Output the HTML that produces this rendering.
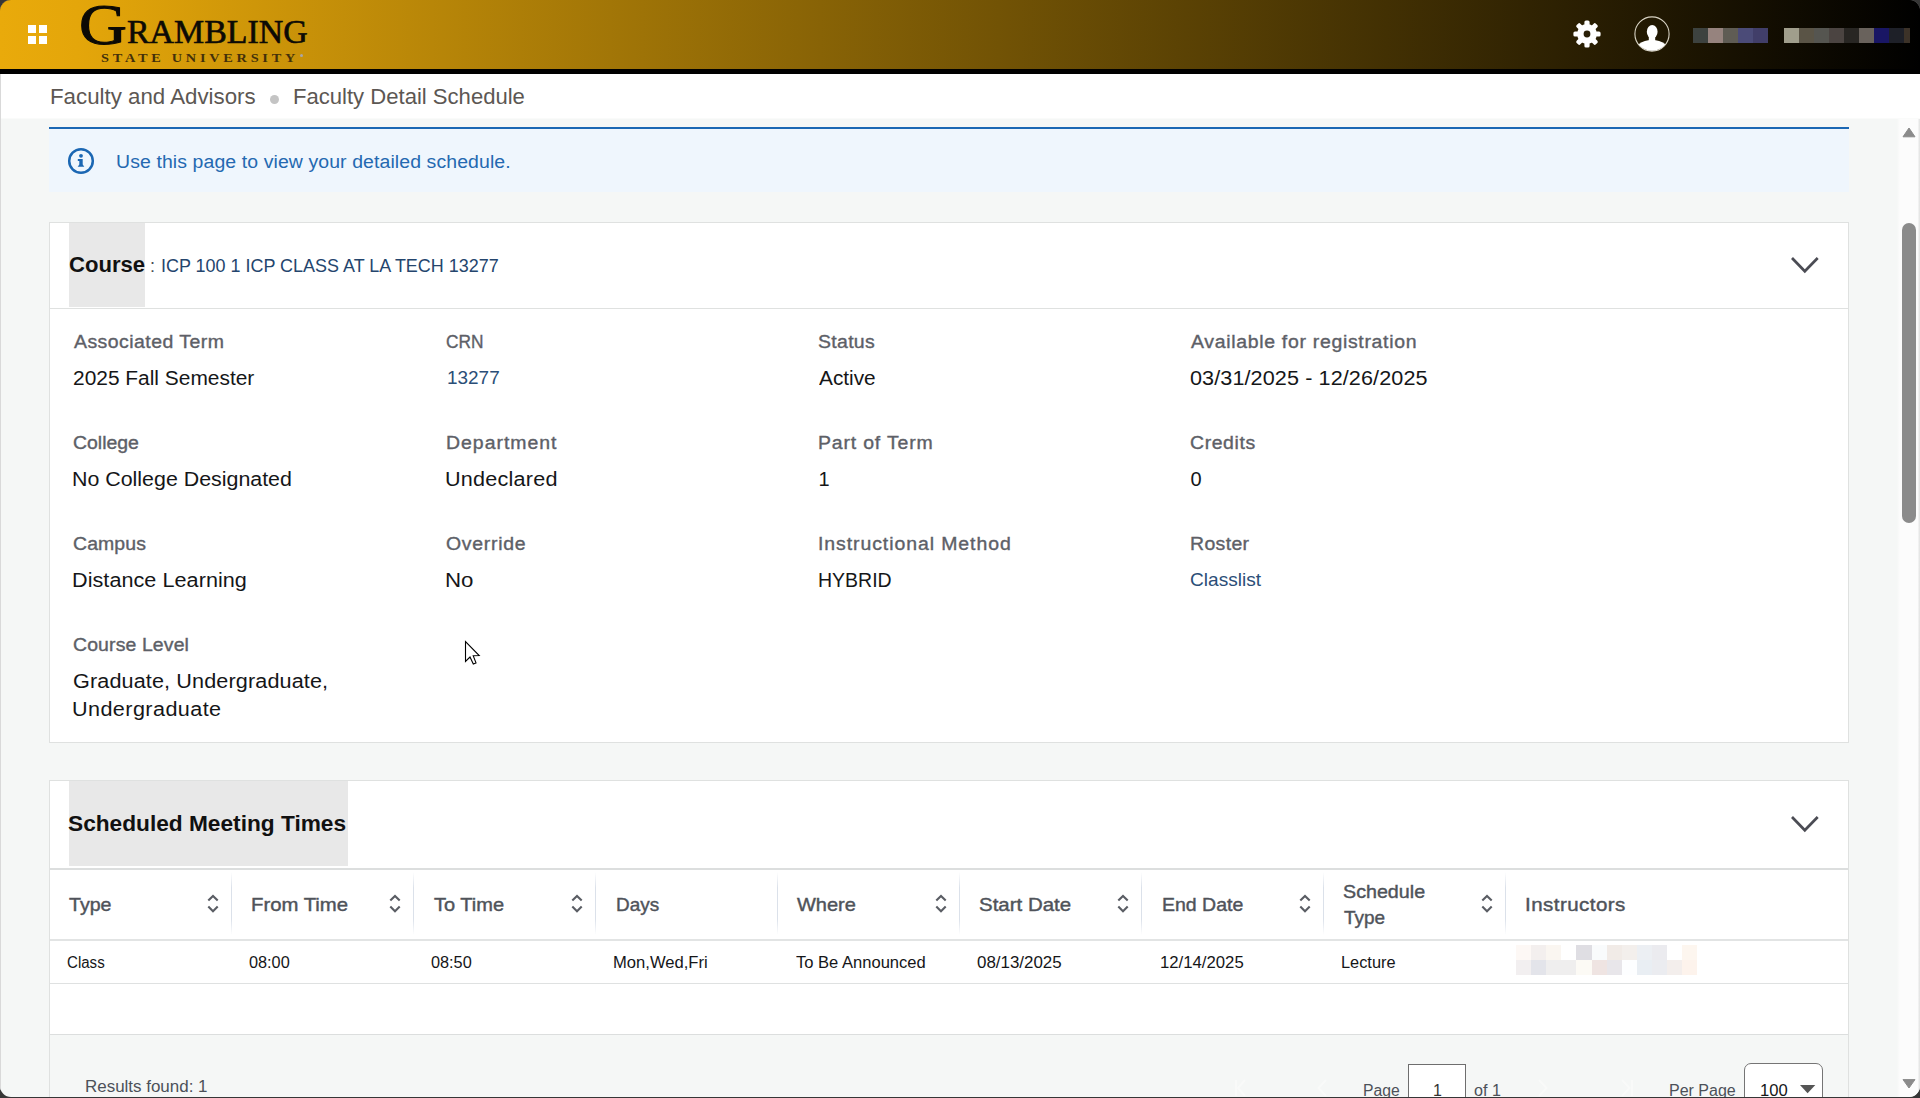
<!DOCTYPE html><html lang="en"><head><meta charset="utf-8"><title>Faculty Detail Schedule</title><style>*{box-sizing:border-box;margin:0;padding:0}
html,body{width:1920px;height:1098px;overflow:hidden;background:#363636;font-family:"Liberation Sans",sans-serif;}
body{position:relative}
#win{position:absolute;left:0;top:0;width:1920px;height:1097px;border-radius:11px;overflow:hidden;background:#f5f7f6;}
.a{position:absolute}
.t{position:absolute;white-space:nowrap;line-height:1;}
.sf{font-family:"Liberation Serif",serif}
#hdr{left:0;top:0;width:1920px;height:74px;background:#000;}
#hdrbg{display:none}
#hdrg{left:0;top:0;width:1920px;height:69px;background:linear-gradient(to right,#e9aa0b 0%,#e4a60a 4%,#000 100%);}
.sq{position:absolute;width:8px;height:8px;background:#fff}
#crumb{left:0;top:74px;width:1920px;height:44px;background:#fff;border-bottom:1px solid #fafbfa;box-sizing:content-box}
#blueline{left:49px;top:127px;width:1800px;height:2px;background:#1b67b3;}
#info{left:49px;top:129px;width:1800px;height:63px;background:#eff6fd;}
.card{position:absolute;left:49px;width:1800px;background:#fff;border:1px solid #dfe1e0;}
.hl{position:absolute;background:#e8e8e8;}
.hline{position:absolute;height:1px;background:#dfe1e0}
.vline{position:absolute;width:1px;background:linear-gradient(to bottom,rgba(219,225,234,0),#dbe1ea 25%,#dbe1ea 75%,rgba(219,225,234,0))}
.crumb{color:#5c5753;}
.inf{color:#2469b1;}
.h2{color:#111;font-weight:bold;}
.sub{color:#24456d;}
.lbl{color:#5d6067;-webkit-text-stroke:0.36px #5d6067;}
.val{color:#151618;}
.lnk{color:#2b4e77;}
.th{color:#4f535a;-webkit-text-stroke:0.42px #4f535a;}
.td{color:#151618;}
.ft{color:#4c5159;}
#sb{left:1896.5px;top:119px;width:23.5px;height:979px;background:linear-gradient(to right,#f5f7f6 0,#fcfcfc 3px,#fcfcfc 20.5px,#ececec 22px,#d9dbda 23.5px);}
#thumb{left:1902px;top:223px;width:14px;height:300px;border-radius:7px;background:#8b8b8b;}
.px{position:absolute;height:15px;width:15px}
</style></head><body>
<div id="win">
<div class="a" id="hdr"><div class="a" id="hdrbg"></div><div class="a" id="hdrg"></div>
<div class="sq" style="left:28px;top:25px"></div><div class="sq" style="left:39px;top:25px"></div><div class="sq" style="left:28px;top:36px"></div><div class="sq" style="left:39px;top:36px"></div>
<svg class="a" style="left:1570px;top:17px" width="34" height="34" viewBox="-17 -17 34 34"><g fill="#fff"><circle r="9.9"/><rect x="-2.6" y="-13.6" width="5.2" height="7" rx="1.6" transform="rotate(0)"/><rect x="-2.6" y="-13.6" width="5.2" height="7" rx="1.6" transform="rotate(45)"/><rect x="-2.6" y="-13.6" width="5.2" height="7" rx="1.6" transform="rotate(90)"/><rect x="-2.6" y="-13.6" width="5.2" height="7" rx="1.6" transform="rotate(135)"/><rect x="-2.6" y="-13.6" width="5.2" height="7" rx="1.6" transform="rotate(180)"/><rect x="-2.6" y="-13.6" width="5.2" height="7" rx="1.6" transform="rotate(225)"/><rect x="-2.6" y="-13.6" width="5.2" height="7" rx="1.6" transform="rotate(270)"/><rect x="-2.6" y="-13.6" width="5.2" height="7" rx="1.6" transform="rotate(315)"/></g><circle r="3.4" fill="#2a1f06"/></svg>
<svg class="a" style="left:1632.3px;top:14px" width="40" height="40" viewBox="-20 -20 40 40"><defs><clipPath id="cc"><circle r="16.8"/></clipPath></defs><circle r="17.1" fill="none" stroke="#d8d3c4" stroke-width="1.1"/><g clip-path="url(#cc)" fill="#fff"><ellipse cx="0.2" cy="-2.3" rx="5.4" ry="6.7"/><rect x="-3.2" y="1" width="6.4" height="7"/><ellipse cx="0" cy="19.6" rx="18.5" ry="13.6"/></g></svg>
<div class="px" style="left:1693px;top:28px;background:#3d423f"></div><div class="px" style="left:1708px;top:28px;background:#96837e"></div><div class="px" style="left:1723px;top:28px;background:#5f5c54"></div><div class="px" style="left:1738px;top:28px;background:#4b4b78"></div><div class="px" style="left:1753px;top:28px;background:#413e69"></div>
<div class="px" style="left:1784px;top:28px;background:#a09e8c"></div><div class="px" style="left:1799px;top:28px;background:#5a5446"></div><div class="px" style="left:1814px;top:28px;background:#555550"></div><div class="px" style="left:1829px;top:28px;background:#4b4441"></div><div class="px" style="left:1844px;top:28px;background:#282623"></div><div class="px" style="left:1859px;top:28px;background:#69625c"></div><div class="px" style="left:1874px;top:28px;background:#191664"></div><div class="px" style="left:1889px;top:28px;background:#1e2028"></div><div class="px" style="left:1904px;top:28px;width:6px;background:#3c3228"></div>
</div>
<div class="a" style="left:299.5px;top:53.8px;width:3.4px;height:3.4px;border-radius:2px;background:#a9a6a8"></div>
<div class="a" id="crumb"></div>
<div class="a" style="left:270px;top:95px;width:8.5px;height:8.5px;border-radius:5px;background:#c4c4c4"></div>
<div class="a" id="blueline"></div><div class="a" id="info"></div>
<svg class="a" style="left:64.8px;top:145.3px" width="32" height="32" viewBox="-16 -16 32 32"><circle r="11.8" fill="none" stroke="#1b67b3" stroke-width="2.5"/><circle cx="0" cy="-5.2" r="1.9" fill="#1b67b3"/><path d="M-3.2 -2 L1.7 -2 L1.7 3.6 L3.3 5.8 L-3.3 5.8 L-1.7 3.6 L-1.7 0 L-3.2 0 Z" fill="#1b67b3"/></svg>

<div class="card" style="top:222px;height:521px"></div>
<div class="hl" style="left:69px;top:223px;width:76px;height:84px"></div>
<div class="hline" style="left:50px;top:308px;width:1798px"></div>
<svg class="a" style="left:1785px;top:250px" width="40" height="30" viewBox="1785 250 40 30"><path d="M1792 258 L1804.8 271.3 L1817.7 258" fill="none" stroke="#4b4c54" stroke-width="2.7"/></svg>

<div class="card" style="top:780.4px;height:330px"></div>
<div class="hl" style="left:69px;top:780.8px;width:279px;height:85.2px"></div>
<div class="hline" style="left:50px;top:868px;width:1798px;height:1.5px;background:#dcdede"></div>
<svg class="a" style="left:1785px;top:809px" width="40" height="30" viewBox="1785 250 40 30"><path d="M1792 258 L1804.8 271.3 L1817.7 258" fill="none" stroke="#4b4c54" stroke-width="2.7"/></svg>
<div class="hline" style="left:50px;top:939px;width:1798px;height:2px;background:#e2e4e4"></div>
<div class="hline" style="left:50px;top:983px;width:1798px;background:#dfe1e1"></div>
<div class="a" style="left:50px;top:1034px;width:1798px;height:70px;background:#f5f7f6;border-top:1px solid #dcdede"></div>
<div class="vline" style="left:231px;top:872px;height:63px"></div><div class="vline" style="left:413px;top:872px;height:63px"></div><div class="vline" style="left:595px;top:872px;height:63px"></div><div class="vline" style="left:777px;top:872px;height:63px"></div><div class="vline" style="left:959px;top:872px;height:63px"></div><div class="vline" style="left:1141px;top:872px;height:63px"></div><div class="vline" style="left:1323px;top:872px;height:63px"></div><div class="vline" style="left:1505px;top:872px;height:63px"></div>
<svg class="a" style="left:204.7px;top:890px" width="16" height="27" viewBox="-8 890 16 27"><path d="M-4.7 900.6 L0 895.9 L4.7 900.6 M-4.7 906.6 L0 911.3 L4.7 906.6" fill="none" stroke="#5a5d64" stroke-width="2.1"/></svg><svg class="a" style="left:386.7px;top:890px" width="16" height="27" viewBox="-8 890 16 27"><path d="M-4.7 900.6 L0 895.9 L4.7 900.6 M-4.7 906.6 L0 911.3 L4.7 906.6" fill="none" stroke="#5a5d64" stroke-width="2.1"/></svg><svg class="a" style="left:568.7px;top:890px" width="16" height="27" viewBox="-8 890 16 27"><path d="M-4.7 900.6 L0 895.9 L4.7 900.6 M-4.7 906.6 L0 911.3 L4.7 906.6" fill="none" stroke="#5a5d64" stroke-width="2.1"/></svg><svg class="a" style="left:932.7px;top:890px" width="16" height="27" viewBox="-8 890 16 27"><path d="M-4.7 900.6 L0 895.9 L4.7 900.6 M-4.7 906.6 L0 911.3 L4.7 906.6" fill="none" stroke="#5a5d64" stroke-width="2.1"/></svg><svg class="a" style="left:1114.7px;top:890px" width="16" height="27" viewBox="-8 890 16 27"><path d="M-4.7 900.6 L0 895.9 L4.7 900.6 M-4.7 906.6 L0 911.3 L4.7 906.6" fill="none" stroke="#5a5d64" stroke-width="2.1"/></svg><svg class="a" style="left:1296.7px;top:890px" width="16" height="27" viewBox="-8 890 16 27"><path d="M-4.7 900.6 L0 895.9 L4.7 900.6 M-4.7 906.6 L0 911.3 L4.7 906.6" fill="none" stroke="#5a5d64" stroke-width="2.1"/></svg><svg class="a" style="left:1478.7px;top:890px" width="16" height="27" viewBox="-8 890 16 27"><path d="M-4.7 900.6 L0 895.9 L4.7 900.6 M-4.7 906.6 L0 911.3 L4.7 906.6" fill="none" stroke="#5a5d64" stroke-width="2.1"/></svg>
<div class="px" style="left:1516.0px;top:945px;width:15.2px;background:#fdf8f5"></div><div class="px" style="left:1516.0px;top:960px;width:15.2px;background:#f2eff0"></div><div class="px" style="left:1531.1px;top:945px;width:15.2px;background:#f3efee"></div><div class="px" style="left:1531.1px;top:960px;width:15.2px;background:#e3e4ea"></div><div class="px" style="left:1546.2px;top:945px;width:15.2px;background:#faf6f1"></div><div class="px" style="left:1546.2px;top:960px;width:15.2px;background:#efeeee"></div><div class="px" style="left:1561.3px;top:945px;width:15.2px;background:#ffffff"></div><div class="px" style="left:1561.3px;top:960px;width:15.2px;background:#efeeee"></div><div class="px" style="left:1576.4px;top:945px;width:15.2px;background:#dfdee3"></div><div class="px" style="left:1576.4px;top:960px;width:15.2px;background:#fcfaf5"></div><div class="px" style="left:1591.5px;top:945px;width:15.2px;background:#f9fbfc"></div><div class="px" style="left:1591.5px;top:960px;width:15.2px;background:#efe4e2"></div><div class="px" style="left:1606.6px;top:945px;width:15.2px;background:#f1ebe7"></div><div class="px" style="left:1606.6px;top:960px;width:15.2px;background:#e8e6ea"></div><div class="px" style="left:1621.7px;top:945px;width:15.2px;background:#f3efec"></div><div class="px" style="left:1621.7px;top:960px;width:15.2px;background:#fdfeff"></div><div class="px" style="left:1636.8px;top:945px;width:15.2px;background:#eceff3"></div><div class="px" style="left:1636.8px;top:960px;width:15.2px;background:#e9eef3"></div><div class="px" style="left:1651.9px;top:945px;width:15.2px;background:#ebebef"></div><div class="px" style="left:1651.9px;top:960px;width:15.2px;background:#ebecf0"></div><div class="px" style="left:1667.0px;top:945px;width:15.2px;background:#ffffff"></div><div class="px" style="left:1667.0px;top:960px;width:15.2px;background:#f3eeec"></div><div class="px" style="left:1682.1px;top:945px;width:15.2px;background:#fdf6ef"></div><div class="px" style="left:1682.1px;top:960px;width:15.2px;background:#fdf3ec"></div>
<svg class="a" style="left:1200px;top:1076px" width="470" height="21" viewBox="1200 1076 470 21"><g fill="none" stroke="#fff" stroke-width="2" opacity="0.4"><path d="M1236 1080 V1096 M1245 1080 L1238 1088 L1245 1096"/><path d="M1326 1080 L1318.5 1088 L1326 1096"/><path d="M1539 1080 L1546.500 1088 L1539 1096"/><path d="M1622 1080 L1629.500 1088 L1622 1096 M1632 1080 V1096"/></g></svg>
<div class="a" style="left:1408px;top:1064px;width:58px;height:40px;background:#fff;border:1px solid #6e6e6e"></div>
<div class="a" style="left:1744px;top:1063.4px;width:79.4px;height:42px;background:#fff;border:1.4px solid #757575;border-radius:7px"></div>
<svg class="a" style="left:1798px;top:1082px" width="20" height="14" viewBox="0 0 20 14"><path d="M2 3 L17.3 3 L9.6 11.2 Z" fill="#555"/></svg>

<svg class="a" style="left:460px;top:636px" width="26" height="34" viewBox="460 636 26 34"><path d="M465.5 641.6 L465.5 661.4 L470 657 L473.3 664 L476 662.9 L473.2 655.8 L479.2 655.5 Z" fill="#fff" stroke="#000" stroke-width="1.1" stroke-linejoin="miter"/></svg>
<div class="a" id="sb"></div><div class="a" id="thumb"></div>
<svg class="a" style="left:1900px;top:124px" width="18" height="16" viewBox="0 0 18 16"><path d="M3 12.8 L9 4 L15 12.8 Z" fill="#8b8b8b" stroke="#8b8b8b" stroke-width="1" stroke-linejoin="round"/></svg>
<svg class="a" style="left:1900px;top:1076px" width="18" height="16" viewBox="0 0 18 16"><path d="M3 3.6 L15 3.6 L9 12 Z" fill="#8b8b8b" stroke="#8b8b8b" stroke-width="1" stroke-linejoin="round"/></svg>

<div class="a" style="left:0;top:74px;width:1px;height:1024px;background:#d9d9d9"></div>

<span class="t sf" style="left:79.30px;top:-3.20px;font-size:56px;transform-origin:0 0;transform:scaleX(1.1841);color:#0c0a05;-webkit-text-stroke:1px #0c0a05;">G</span>
<span class="t sf" style="left:127.30px;top:16.06px;font-size:33px;transform-origin:0 0;transform:scaleX(1.0266);color:#0c0a05;-webkit-text-stroke:0.6px #0c0a05;">RAMBLING</span>
<span class="t sf" style="left:100.60px;top:51.01px;font-size:13px;transform-origin:0 0;transform:scaleX(1.1001);color:#43300a;font-weight:bold;letter-spacing:3.4px;">STATE UNIVERSITY</span>
<span class="t crumb" style="left:50.10px;top:85.85px;font-size:21.8px;transform-origin:0 0;transform:scaleX(1.0227);letter-spacing:0.000px;">Faculty and Advisors</span>
<span class="t crumb" style="left:293.10px;top:85.85px;font-size:21.8px;transform-origin:0 0;transform:scaleX(1.0127);letter-spacing:0.000px;">Faculty Detail Schedule</span>
<span class="t inf" style="left:116.10px;top:152.76px;font-size:18px;transform-origin:0 0;transform:scaleX(1.0800);letter-spacing:0.096px;">Use this page to view your detailed schedule.</span>
<span class="t h2" style="left:69.10px;top:254.08px;font-size:22px;transform-origin:0 0;transform:scaleX(1.0040);letter-spacing:0.000px;">Course</span>
<span class="t sub" style="left:150.00px;top:257.46px;font-size:18px;color:#4a4d55">:</span>
<span class="t sub" style="left:161.10px;top:257.46px;font-size:18px;transform-origin:0 0;transform:scaleX(0.9975);letter-spacing:0.000px;">ICP 100 1 ICP CLASS AT LA TECH 13277</span>
<span class="t lbl" style="left:73.90px;top:332.76px;font-size:18px;transform-origin:0 0;transform:scaleX(1.0800);letter-spacing:0.433px;">Associated Term</span>
<span class="t val" style="left:72.90px;top:368.07px;font-size:20px;transform-origin:0 0;transform:scaleX(1.0454);letter-spacing:0.000px;">2025 Fall Semester</span>
<span class="t lbl" style="left:446.30px;top:332.76px;font-size:18px;transform-origin:0 0;transform:scaleX(0.9615);letter-spacing:0.000px;">CRN</span>
<span class="t lnk" style="left:447.30px;top:367.92px;font-size:19px;transform-origin:0 0;transform:scaleX(0.9973);letter-spacing:0.000px;">13277</span>
<span class="t lbl" style="left:818.10px;top:332.76px;font-size:18px;transform-origin:0 0;transform:scaleX(1.0800);letter-spacing:0.294px;">Status</span>
<span class="t val" style="left:819.10px;top:368.07px;font-size:20px;transform-origin:0 0;transform:scaleX(1.0410);letter-spacing:-0.000px;">Active</span>
<span class="t lbl" style="left:1190.70px;top:332.76px;font-size:18px;transform-origin:0 0;transform:scaleX(1.0800);letter-spacing:0.641px;">Available for registration</span>
<span class="t val" style="left:1189.70px;top:368.07px;font-size:20px;transform-origin:0 0;transform:scaleX(1.0800);letter-spacing:0.088px;">03/31/2025 - 12/26/2025</span>
<span class="t lbl" style="left:72.90px;top:433.76px;font-size:18px;transform-origin:0 0;transform:scaleX(1.0795);letter-spacing:-0.000px;">College</span>
<span class="t val" style="left:71.90px;top:469.07px;font-size:20px;transform-origin:0 0;transform:scaleX(1.0691);letter-spacing:0.000px;">No College Designated</span>
<span class="t lbl" style="left:446.30px;top:433.76px;font-size:18px;transform-origin:0 0;transform:scaleX(1.0800);letter-spacing:0.919px;">Department</span>
<span class="t val" style="left:445.30px;top:469.07px;font-size:20px;transform-origin:0 0;transform:scaleX(1.0800);letter-spacing:0.208px;">Undeclared</span>
<span class="t lbl" style="left:818.10px;top:433.76px;font-size:18px;transform-origin:0 0;transform:scaleX(1.0800);letter-spacing:0.773px;">Part of Term</span>
<span class="t val" style="left:818.50px;top:469.07px;font-size:20px;">1</span>
<span class="t lbl" style="left:1189.70px;top:433.76px;font-size:18px;transform-origin:0 0;transform:scaleX(1.0800);letter-spacing:0.544px;">Credits</span>
<span class="t val" style="left:1190.40px;top:469.07px;font-size:20px;">0</span>
<span class="t lbl" style="left:72.90px;top:534.76px;font-size:18px;transform-origin:0 0;transform:scaleX(1.0800);letter-spacing:0.094px;">Campus</span>
<span class="t val" style="left:71.90px;top:570.07px;font-size:20px;transform-origin:0 0;transform:scaleX(1.0800);letter-spacing:0.045px;">Distance Learning</span>
<span class="t lbl" style="left:446.30px;top:534.76px;font-size:18px;transform-origin:0 0;transform:scaleX(1.0800);letter-spacing:0.654px;">Override</span>
<span class="t val" style="left:445.30px;top:570.07px;font-size:20px;transform-origin:0 0;transform:scaleX(1.1142);letter-spacing:0.000px;">No</span>
<span class="t lbl" style="left:818.10px;top:534.76px;font-size:18px;transform-origin:0 0;transform:scaleX(1.0800);letter-spacing:0.860px;">Instructional Method</span>
<span class="t val" style="left:818.30px;top:570.07px;font-size:20px;transform-origin:0 0;transform:scaleX(0.9751);letter-spacing:0.000px;">HYBRID</span>
<span class="t lbl" style="left:1189.70px;top:534.76px;font-size:18px;transform-origin:0 0;transform:scaleX(1.0800);letter-spacing:0.341px;">Roster</span>
<span class="t lnk" style="left:1189.70px;top:569.92px;font-size:19px;transform-origin:0 0;transform:scaleX(1.0052);letter-spacing:0.000px;">Classlist</span>
<span class="t lbl" style="left:72.90px;top:635.76px;font-size:18px;transform-origin:0 0;transform:scaleX(1.0800);letter-spacing:0.114px;">Course Level</span>
<span class="t val" style="left:72.90px;top:671.07px;font-size:20px;transform-origin:0 0;transform:scaleX(1.0800);letter-spacing:0.118px;">Graduate, Undergraduate,</span>
<span class="t val" style="left:71.90px;top:699.07px;font-size:20px;transform-origin:0 0;transform:scaleX(1.0800);letter-spacing:0.385px;">Undergraduate</span>
<span class="t h2" style="left:67.90px;top:812.58px;font-size:22px;transform-origin:0 0;transform:scaleX(1.0308);letter-spacing:0.000px;">Scheduled Meeting Times</span>
<span class="t th" style="left:69.10px;top:894.92px;font-size:19px;transform-origin:0 0;transform:scaleX(1.0315);letter-spacing:0.000px;">Type</span>
<span class="t th" style="left:250.70px;top:894.92px;font-size:19px;transform-origin:0 0;transform:scaleX(1.0696);letter-spacing:0.000px;">From Time</span>
<span class="t th" style="left:433.50px;top:894.92px;font-size:19px;transform-origin:0 0;transform:scaleX(1.0536);letter-spacing:0.000px;">To Time</span>
<span class="t th" style="left:615.90px;top:894.92px;font-size:19px;transform-origin:0 0;transform:scaleX(0.9955);letter-spacing:0.000px;">Days</span>
<span class="t th" style="left:796.90px;top:894.92px;font-size:19px;transform-origin:0 0;transform:scaleX(1.0524);letter-spacing:-0.000px;">Where</span>
<span class="t th" style="left:978.70px;top:894.92px;font-size:19px;transform-origin:0 0;transform:scaleX(1.0766);letter-spacing:0.000px;">Start Date</span>
<span class="t th" style="left:1161.90px;top:894.92px;font-size:19px;transform-origin:0 0;transform:scaleX(1.0261);letter-spacing:0.000px;">End Date</span>
<span class="t th" style="left:1525.10px;top:894.92px;font-size:19px;transform-origin:0 0;transform:scaleX(1.0800);letter-spacing:0.417px;">Instructors</span>
<span class="t th" style="left:1342.70px;top:881.92px;font-size:19px;transform-origin:0 0;transform:scaleX(1.0362);letter-spacing:0.000px;">Schedule</span>
<span class="t th" style="left:1343.70px;top:907.92px;font-size:19px;transform-origin:0 0;transform:scaleX(0.9975);letter-spacing:0.000px;">Type</span>
<span class="t td" style="left:67.10px;top:954.76px;font-size:16px;transform-origin:0 0;transform:scaleX(0.9421);letter-spacing:0.000px;">Class</span>
<span class="t td" style="left:249.10px;top:954.76px;font-size:16px;transform-origin:0 0;transform:scaleX(1.0163);letter-spacing:0.000px;">08:00</span>
<span class="t td" style="left:431.10px;top:954.76px;font-size:16px;transform-origin:0 0;transform:scaleX(1.0163);letter-spacing:0.000px;">08:50</span>
<span class="t td" style="left:613.10px;top:954.76px;font-size:16px;transform-origin:0 0;transform:scaleX(1.0375);letter-spacing:-0.000px;">Mon,Wed,Fri</span>
<span class="t td" style="left:796.10px;top:954.76px;font-size:16px;transform-origin:0 0;transform:scaleX(1.0340);letter-spacing:-0.000px;">To Be Announced</span>
<span class="t td" style="left:977.10px;top:954.76px;font-size:16px;transform-origin:0 0;transform:scaleX(1.0577);letter-spacing:0.000px;">08/13/2025</span>
<span class="t td" style="left:1159.50px;top:954.76px;font-size:16px;transform-origin:0 0;transform:scaleX(1.0452);letter-spacing:0.000px;">12/14/2025</span>
<span class="t td" style="left:1341.30px;top:954.76px;font-size:16px;transform-origin:0 0;transform:scaleX(1.0211);letter-spacing:0.000px;">Lecture</span>
<span class="t ft" style="left:84.90px;top:1078.76px;font-size:16px;transform-origin:0 0;transform:scaleX(1.0595);letter-spacing:0.000px;">Results found: 1</span>
<span class="t ft" style="left:1363.10px;top:1083.26px;font-size:16px;transform-origin:0 0;transform:scaleX(0.9819);letter-spacing:0.000px;">Page</span>
<span class="t td" style="left:1433.00px;top:1083.06px;font-size:16px;color:#333">1</span>
<span class="t ft" style="left:1473.90px;top:1083.26px;font-size:16px;transform-origin:0 0;transform:scaleX(1.0080);letter-spacing:0.000px;">of 1</span>
<span class="t ft" style="left:1669.10px;top:1083.46px;font-size:16px;transform-origin:0 0;transform:scaleX(0.9997);letter-spacing:0.000px;">Per Page</span>
<span class="t td" style="left:1760.10px;top:1082.66px;font-size:16px;transform-origin:0 0;transform:scaleX(1.0373);letter-spacing:0.000px;">100</span>
</div></body></html>
